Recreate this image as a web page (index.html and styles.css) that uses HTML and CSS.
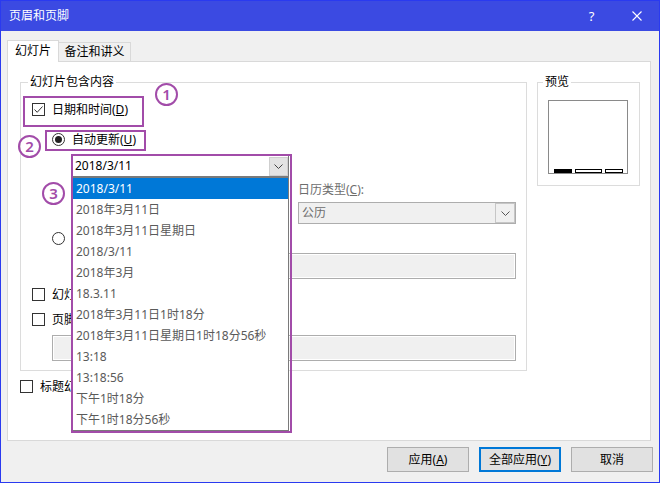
FILE: index.html
```html
<!DOCTYPE html>
<html>
<head>
<meta charset="utf-8">
<link rel="stylesheet" href="styles.css">
</head>
<body>
<div class="window">
  <div class="titlebar">
    <span class="title">页眉和页脚</span>
    <span class="tb-btn help">?</span>
    <span class="tb-btn close"><svg width="10" height="10" viewBox="0 0 10 10"><path d="M0.5 0.5L9.5 9.5M9.5 0.5L0.5 9.5" stroke="#fff" stroke-width="1.1" fill="none"/></svg></span>
  </div>

  <div class="tabs">
    <div class="tab active">幻灯片</div>
    <div class="tab second">备注和讲义</div>
  </div>

  <div class="panel">
    <div class="panel-top">
      <div class="group main">
        <div class="legend">幻灯片包含内容</div>
        <div class="row r-date"><span class="cb"><svg width="11" height="11" viewBox="0 0 11 11"><path d="M1.5 5.5L4.2 8.3L9.5 2.5" stroke="#333" stroke-width="1" fill="none"/></svg></span><span class="lbl">日期和时间(<u>D</u>)</span></div>
        <div class="row r-auto"><span class="rb on"></span><span class="lbl">自动更新(<u>U</u>)</span></div>
        <div class="combo date-combo"><span class="combo-text">2018/3/11</span><span class="combo-btn"><svg width="9" height="5" viewBox="0 0 9 5"><path d="M0.5 0.5L4.5 4.5L8.5 0.5" stroke="#444" stroke-width="1" fill="none"/></svg></span></div>
        <div class="cal">
          <div class="cal-label">日历类型(<u>C</u>):</div>
          <div class="combo cal-combo"><span class="combo-text">公历</span><span class="combo-btn cal-btn"><svg width="9" height="5" viewBox="0 0 9 5"><path d="M0.5 0.5L4.5 4.5L8.5 0.5" stroke="#555" stroke-width="1" fill="none"/></svg></span></div>
        </div>
        <div class="row r-fixed"><span class="rb"></span><span class="lbl">固定(<u>X</u>)</span></div>
        <div class="textbox fixed-box"></div>
        <div class="row r-num"><span class="cb"></span><span class="lbl">幻灯片编号(<u>N</u>)</span></div>
        <div class="row r-foot"><span class="cb"></span><span class="lbl">页脚(<u>F</u>)</span></div>
        <div class="textbox foot-box"></div>
      </div>
      <div class="group preview">
        <div class="legend">预览</div>
        <div class="slide">
          <span class="bar b1"></span><span class="bar b2"></span><span class="bar b3"></span>
        </div>
      </div>
    </div>
    <div class="row r-title"><span class="cb"></span><span class="lbl">标题幻灯片中不显示(<u>S</u>)</span></div>
  </div>

  <div class="buttons">
    <div class="btn">应用(<u>A</u>)</div>
    <div class="btn default">全部应用(<u>Y</u>)</div>
    <div class="btn">取消</div>
  </div>

  <div class="dropdown">
    <div class="item sel">2018/3/11</div>
    <div class="item">2018年3月11日</div>
    <div class="item">2018年3月11日星期日</div>
    <div class="item">2018/3/11</div>
    <div class="item">2018年3月</div>
    <div class="item">18.3.11</div>
    <div class="item">2018年3月11日1时18分</div>
    <div class="item">2018年3月11日星期日1时18分56秒</div>
    <div class="item">13:18</div>
    <div class="item">13:18:56</div>
    <div class="item">下午1时18分</div>
    <div class="item">下午1时18分56秒</div>
  </div>

  <div class="mark m1"></div>
  <div class="mark m2"></div>
  <div class="mark m3"></div>
  <span class="num n1">1</span>
  <span class="num n2">2</span>
  <span class="num n3">3</span>
</div>
</body>
</html>
```

FILE: styles.css
```css
* { box-sizing: border-box; }
html, body { margin: 0; padding: 0; }
body {
  width: 660px;
  height: 483px;
  overflow: hidden;
  font-family: "Noto Sans", "Noto Sans CJK SC", sans-serif;
  font-size: 12px;
  color: #000;
  background: #fff;
}
u { text-decoration: underline; text-underline-offset: 1px; }

.window {
  position: relative;
  width: 660px;
  height: 483px;
  border: 1px solid #2a3af0;
  background: #f0f0f0;
}

.titlebar {
  height: 30px;
  background: #3b4ae2;
  color: #fff;
  display: flex;
  align-items: center;
  padding-left: 8px;
}
.title { flex: 1; line-height: 16px; }
.tb-btn {
  width: 45px;
  height: 30px;
  display: flex;
  align-items: center;
  justify-content: center;
}
.help { font-size: 13px; }

.tabs {
  display: flex;
  align-items: flex-end;
  height: 21px;
  margin: 9px 0 0 6px;
}
.tab {
  height: 19px;
  border: 1px solid #d9d9d9;
  border-bottom: none;
  background: #f0f0f0;
  line-height: 18px;
  text-align: center;
}
.tab.active {
  width: 52px;
  height: 22px;
  margin-bottom: -1px;
  padding-top: 1px;
  background: #fff;
  position: relative;
  z-index: 1;
}
.tab.second { width: 72px; border-left: none; }

.panel {
  width: 644px;
  height: 380px;
  margin-left: 6px;
  background: #fff;
  border: 1px solid #d9d9d9;
  padding: 20px 0 0 12px;
}
.panel-top { display: flex; align-items: flex-start; }

.group {
  position: relative;
  border: 1px solid #dcdcdc;
}
.group.main { width: 507px; height: 289px; }
.group.preview { width: 103px; height: 104px; margin-left: 10px; }
.legend {
  position: absolute;
  top: -9px;
  left: 7px;
  padding: 0 2px;
  line-height: 16px;
  background: #fff;
}
.preview .legend { left: 5px; }

.row { display: flex; align-items: center; height: 13px; }
.lbl { margin-left: 7px; line-height: 14px; white-space: nowrap; }
.cb {
  width: 13px;
  height: 13px;
  flex: none;
  border: 1px solid #333;
  background: #fff;
  display: flex;
  align-items: center;
  justify-content: center;
}
.rb {
  width: 13px;
  height: 13px;
  flex: none;
  border: 1px solid #333;
  border-radius: 50%;
  background: #fff;
  display: flex;
  align-items: center;
  justify-content: center;
}
.rb.on::after {
  content: "";
  width: 7px;
  height: 7px;
  border-radius: 50%;
  background: #222;
}

.r-date { margin: 20px 0 0 11px; }
.r-auto { margin: 17px 0 0 31px; }

.combo {
  display: flex;
  align-items: stretch;
  height: 22px;
  border: 1px solid #7a7a7a;
  background: #fff;
}
.combo-text { flex: 1; padding-left: 2px; line-height: 20px; }
.combo-btn {
  width: 19px;
  margin: 1px 0 0 0;
  background: #e3e3e3;
  border: 1px solid #cfcfcf;
  display: flex;
  align-items: center;
  justify-content: center;
}
.date-combo { width: 217px; margin: 9px 0 0 51px; }

.cal { margin: 5px 0 0 277px; }
.cal-label { line-height: 16px; color: #6d6d6d; }
.cal-combo {
  width: 218px;
  margin-top: 4px;
  border-color: #adadad;
  background: #f0f0f0;
  color: #6d6d6d;
}
.cal-combo .combo-text { padding-left: 3px; }
.cal-btn { margin: 0; background: #f0f0f0; border: 1px solid #c6c6c6; width: 20px; }

.r-fixed { margin: 8px 0 0 31px; }

.textbox {
  height: 26px;
  border: 1px solid #adadad;
  background: #f0f0f0;
  box-shadow: inset 0 0 0 1px #fff;
}
.fixed-box { width: 444px; margin: 8px 0 0 51px; }
.r-num { margin: 9px 0 0 11px; }
.r-foot { margin: 12px 0 0 11px; }
.foot-box { width: 464px; margin: 9px 0 0 31px; }

.slide {
  width: 80px;
  height: 74px;
  margin: 17px 0 0 10px;
  border: 1px solid #8a8a8a;
  background: #fff;
  display: flex;
  align-items: flex-end;
  padding-left: 5px;
  gap: 3px;
}
.bar { height: 4px; display: block; }
.b1 { width: 18px; background: #000; }
.b2 { width: 27px; border: 1px solid #000; background: #fff; }
.b3 { width: 18px; border: 1px solid #000; background: #fff; }

.r-title { margin: 9px 0 0 0; }

.buttons {
  display: flex;
  justify-content: flex-end;
  gap: 10px;
  margin-top: 6px;
  padding-right: 6px;
}
.btn {
  width: 82px;
  height: 25px;
  border: 1px solid #adadad;
  background: #e1e1e1;
  display: flex;
  align-items: center;
  justify-content: center;
  line-height: 14px;
}
.btn.default { border: 2px solid #0078d7; }

.dropdown {
  position: absolute;
  left: 71px;
  top: 176px;
  width: 217px;
  height: 254px;
  border: 1px solid #7a7a7a;
  background: #fff;
  z-index: 5;
}
.item {
  height: 21px;
  line-height: 21px;
  padding-left: 3px;
  color: #5a5a5a;
  white-space: nowrap;
}
.item.sel { background: #0078d7; color: #fff; }

.mark {
  position: absolute;
  border: 2px solid #a24ca9;
  z-index: 6;
}
.m1 { left: 22px; top: 95px; width: 121px; height: 31px; }
.m2 { left: 44px; top: 129px; width: 101px; height: 21px; }
.m3 { left: 70px; top: 153px; width: 221px; height: 279px; }

.num {
  position: absolute;
  width: 23px;
  height: 23px;
  border: 2px solid #a24ca9;
  border-radius: 50%;
  color: #a24ca9;
  font-family: "Noto Sans", sans-serif;
  font-weight: 600;
  font-size: 15px;
  line-height: 19px;
  text-align: center;
  z-index: 6;
}
.n1 { left: 154px; top: 82px; }
.n2 { left: 17px; top: 134px; }
.n3 { left: 41px; top: 181px; }
```
